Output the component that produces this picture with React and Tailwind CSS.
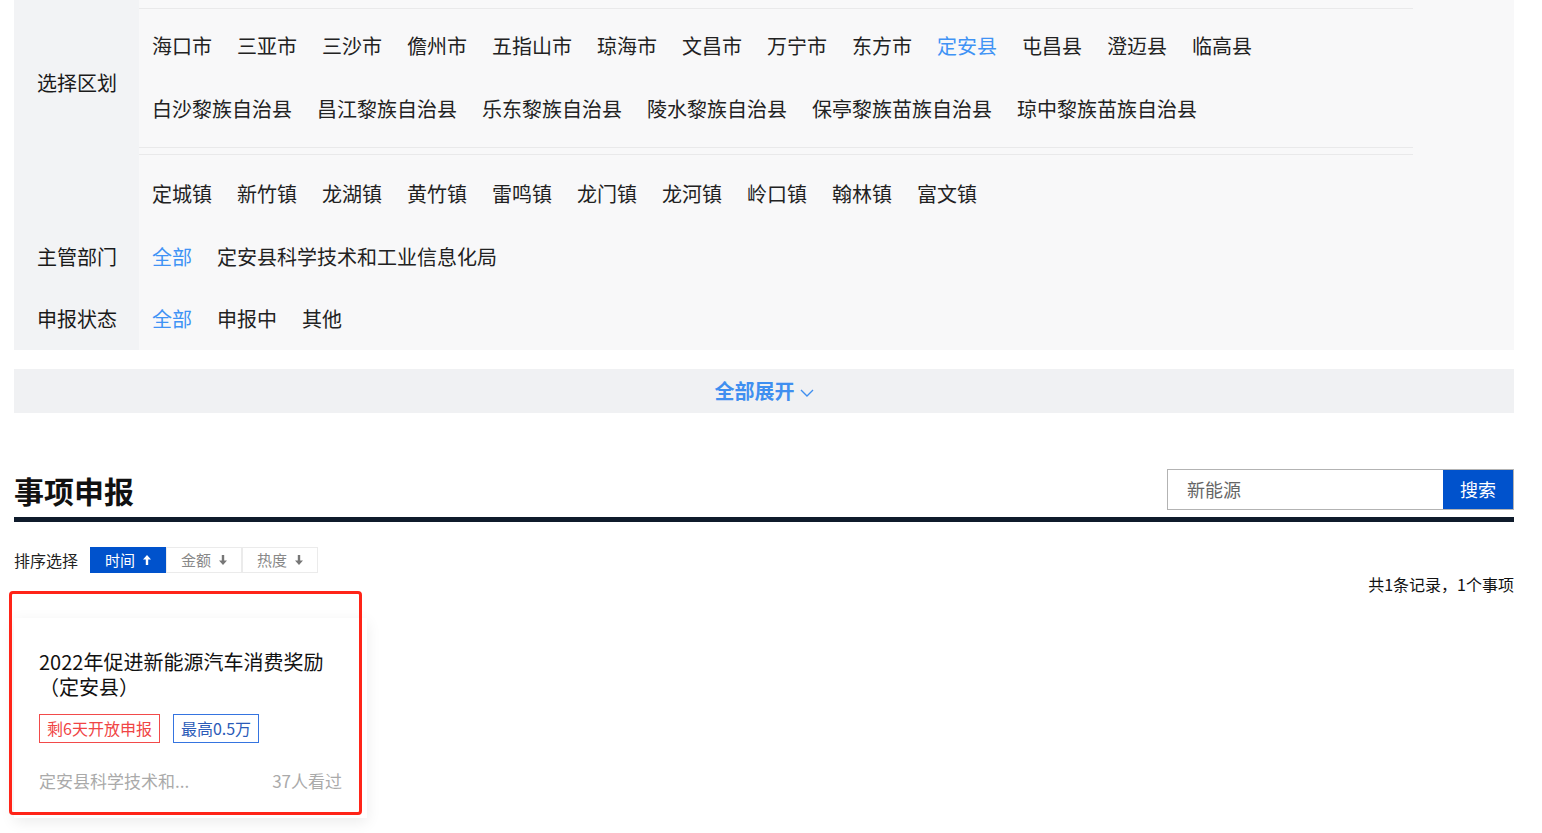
import { useState } from 'react';

const regions = [
  ['海口市', '三亚市', '三沙市', '儋州市', '五指山市', '琼海市', '文昌市', '万宁市', '东方市', '定安县', '屯昌县', '澄迈县', '临高县'],
  ['白沙黎族自治县', '昌江黎族自治县', '乐东黎族自治县', '陵水黎族自治县', '保亭黎族苗族自治县', '琼中黎族苗族自治县'],
];

const towns = ['定城镇', '新竹镇', '龙湖镇', '黄竹镇', '雷鸣镇', '龙门镇', '龙河镇', '岭口镇', '翰林镇', '富文镇'];

const font = { fontFamily: '"Noto Sans CJK SC", "Liberation Sans", sans-serif' };

const Arrow = ({ up, className }) => (
  <svg viewBox="0 0 8 10" className={className} fill="currentColor">
    {up ? (
      <path d="M4 0 L8 4.5 H5.2 V10 H2.8 V4.5 H0 Z" />
    ) : (
      <path d="M4 10 L8 5.5 H5.2 V0 H2.8 V5.5 H0 Z" />
    )}
  </svg>
);

const Item = ({ children, active }) => (
  <span className={`text-[20px] leading-[24px] cursor-pointer ${active ? 'text-[#4093f5]' : 'text-[#222]'}`}>
    {children}
  </span>
);

const App = () => {
  const [area, setArea] = useState('定安县');
  const [sort, setSort] = useState('time');

  return (
    <div className="min-h-screen bg-white" style={font}>
      <div className="ml-[14px] w-[1500px]">
        {/* filter panel */}
        <div className="bg-[#f8f8f9]">
          <div className="flex">
            <div className="w-[125px] shrink-0 bg-[#f2f3f5] pl-[23px] pt-[71px] text-[20px] leading-[24px] text-[#1a1a1a]">
              选择区划
            </div>
            <div className="flex-1 pt-[8px] pr-[101px]">
              <div className="border-y border-[#e9e9ea] py-[6px] px-[13px]">
                {regions.map((row, i) => (
                  <div key={i} className="h-[63px] flex items-center gap-[25px]">
                    {row.map((r) => (
                      <span key={r} onClick={() => setArea(r)}>
                        <Item active={area === r}>{r}</Item>
                      </span>
                    ))}
                  </div>
                ))}
              </div>
              <div className="mt-[6px] border-t border-[#e9e9ea] pt-[7px] px-[13px]">
                <div className="h-[63px] flex items-center gap-[25px]">
                  {towns.map((t) => (
                    <Item key={t}>{t}</Item>
                  ))}
                </div>
              </div>
            </div>
          </div>
          <div className="flex h-[63px]">
            <div className="w-[125px] shrink-0 bg-[#f2f3f5] pl-[23px] flex items-center text-[20px] text-[#1a1a1a]">
              主管部门
            </div>
            <div className="flex-1 flex items-center gap-[25px] px-[13px]">
              <Item active>全部</Item>
              <Item>定安县科学技术和工业信息化局</Item>
            </div>
          </div>
          <div className="flex h-[62px]">
            <div className="w-[125px] shrink-0 bg-[#f2f3f5] pl-[23px] flex items-center text-[20px] text-[#1a1a1a]">
              申报状态
            </div>
            <div className="flex-1 flex items-center gap-[25px] px-[13px]">
              <Item active>全部</Item>
              <Item>申报中</Item>
              <Item>其他</Item>
            </div>
          </div>
        </div>

        <button className="mt-[19px] w-full h-[44px] bg-[#f0f1f3] flex items-center justify-center gap-[5px] text-[#3f8ff0] text-[20px] font-bold">
          全部展开
          <svg viewBox="0 0 14 8" className="w-[14px] h-[8px] mt-[3px]" fill="none" stroke="currentColor" strokeWidth="1.4">
            <path d="M1 1 L7 7 L13 1" />
          </svg>
        </button>

        {/* list header */}
        <div className="mt-[56px] flex items-end justify-between">
          <h2 className="text-[30px] leading-[40px] font-bold text-[#111]">事项申报</h2>
          <div className="flex h-[41px] border border-[#b3b3b3]">
            <input
              defaultValue="新能源"
              className="w-[275px] pl-[19px] text-[18px] text-[#666] outline-none bg-white"
              style={font}
            />
            <button className="w-[70px] bg-[#0052cc] text-white text-[18px]">搜索</button>
          </div>
        </div>
        <div className="mt-[7px] h-[5px] bg-[#0f1b2b]" />

        <div className="mt-[25px] flex items-center">
          <span className="text-[16px] text-[#222] mr-[12px]">排序选择</span>
          {[
            ['time', '时间', true],
            ['amount', '金额', false],
            ['hot', '热度', false],
          ].map(([k, label, up]) => (
            <button
              key={k}
              onClick={() => setSort(k)}
              className={`w-[76px] h-[26px] flex items-center justify-center gap-[8px] text-[15px] ${
                sort === k ? 'bg-[#0052cc] text-white' : 'border border-[#ebebeb] text-[#888]'
              }`}
            >
              {label}
              <Arrow up={up} className={`w-[8px] h-[10px] ${sort === k ? 'text-white' : 'text-[#777]'}`} />
            </button>
          ))}
        </div>

        <div className="mt-0 text-right text-[16px] leading-[22px] text-[#111]">共1条记录，1个事项</div>

        {/* result card */}
        <div className="relative mt-[23px] w-[353px] h-[200px] bg-white shadow-[0_4px_14px_rgba(0,0,0,0.08)] px-[25px] pt-[31px]">
          <div className="w-[292px] text-[20px] leading-[25px] text-[#111]">
            2022年促进新能源汽车消费奖励（定安县）
          </div>
          <div className="mt-[15px] flex gap-[13px]">
            <span className="h-[29px] px-[7px] border border-[#f24a4a] text-[#f04545] text-[16px] leading-[27px]">
              剩6天开放申报
            </span>
            <span className="h-[29px] px-[7px] border border-[#3574e0] text-[#2b5bb8] text-[16px] leading-[27px]">
              最高0.5万
            </span>
          </div>
          <div className="mt-[26px] flex justify-between text-[17px] leading-[24px] text-[#aaa]">
            <span>定安县科学技术和...</span>
            <span>37人看过</span>
          </div>
          <div className="absolute left-[-5px] top-[-27px] w-[353px] h-[224px] border-[3px] border-[#ff2418] rounded-[4px] pointer-events-none" />
        </div>
      </div>
    </div>
  );
};

export default App;
